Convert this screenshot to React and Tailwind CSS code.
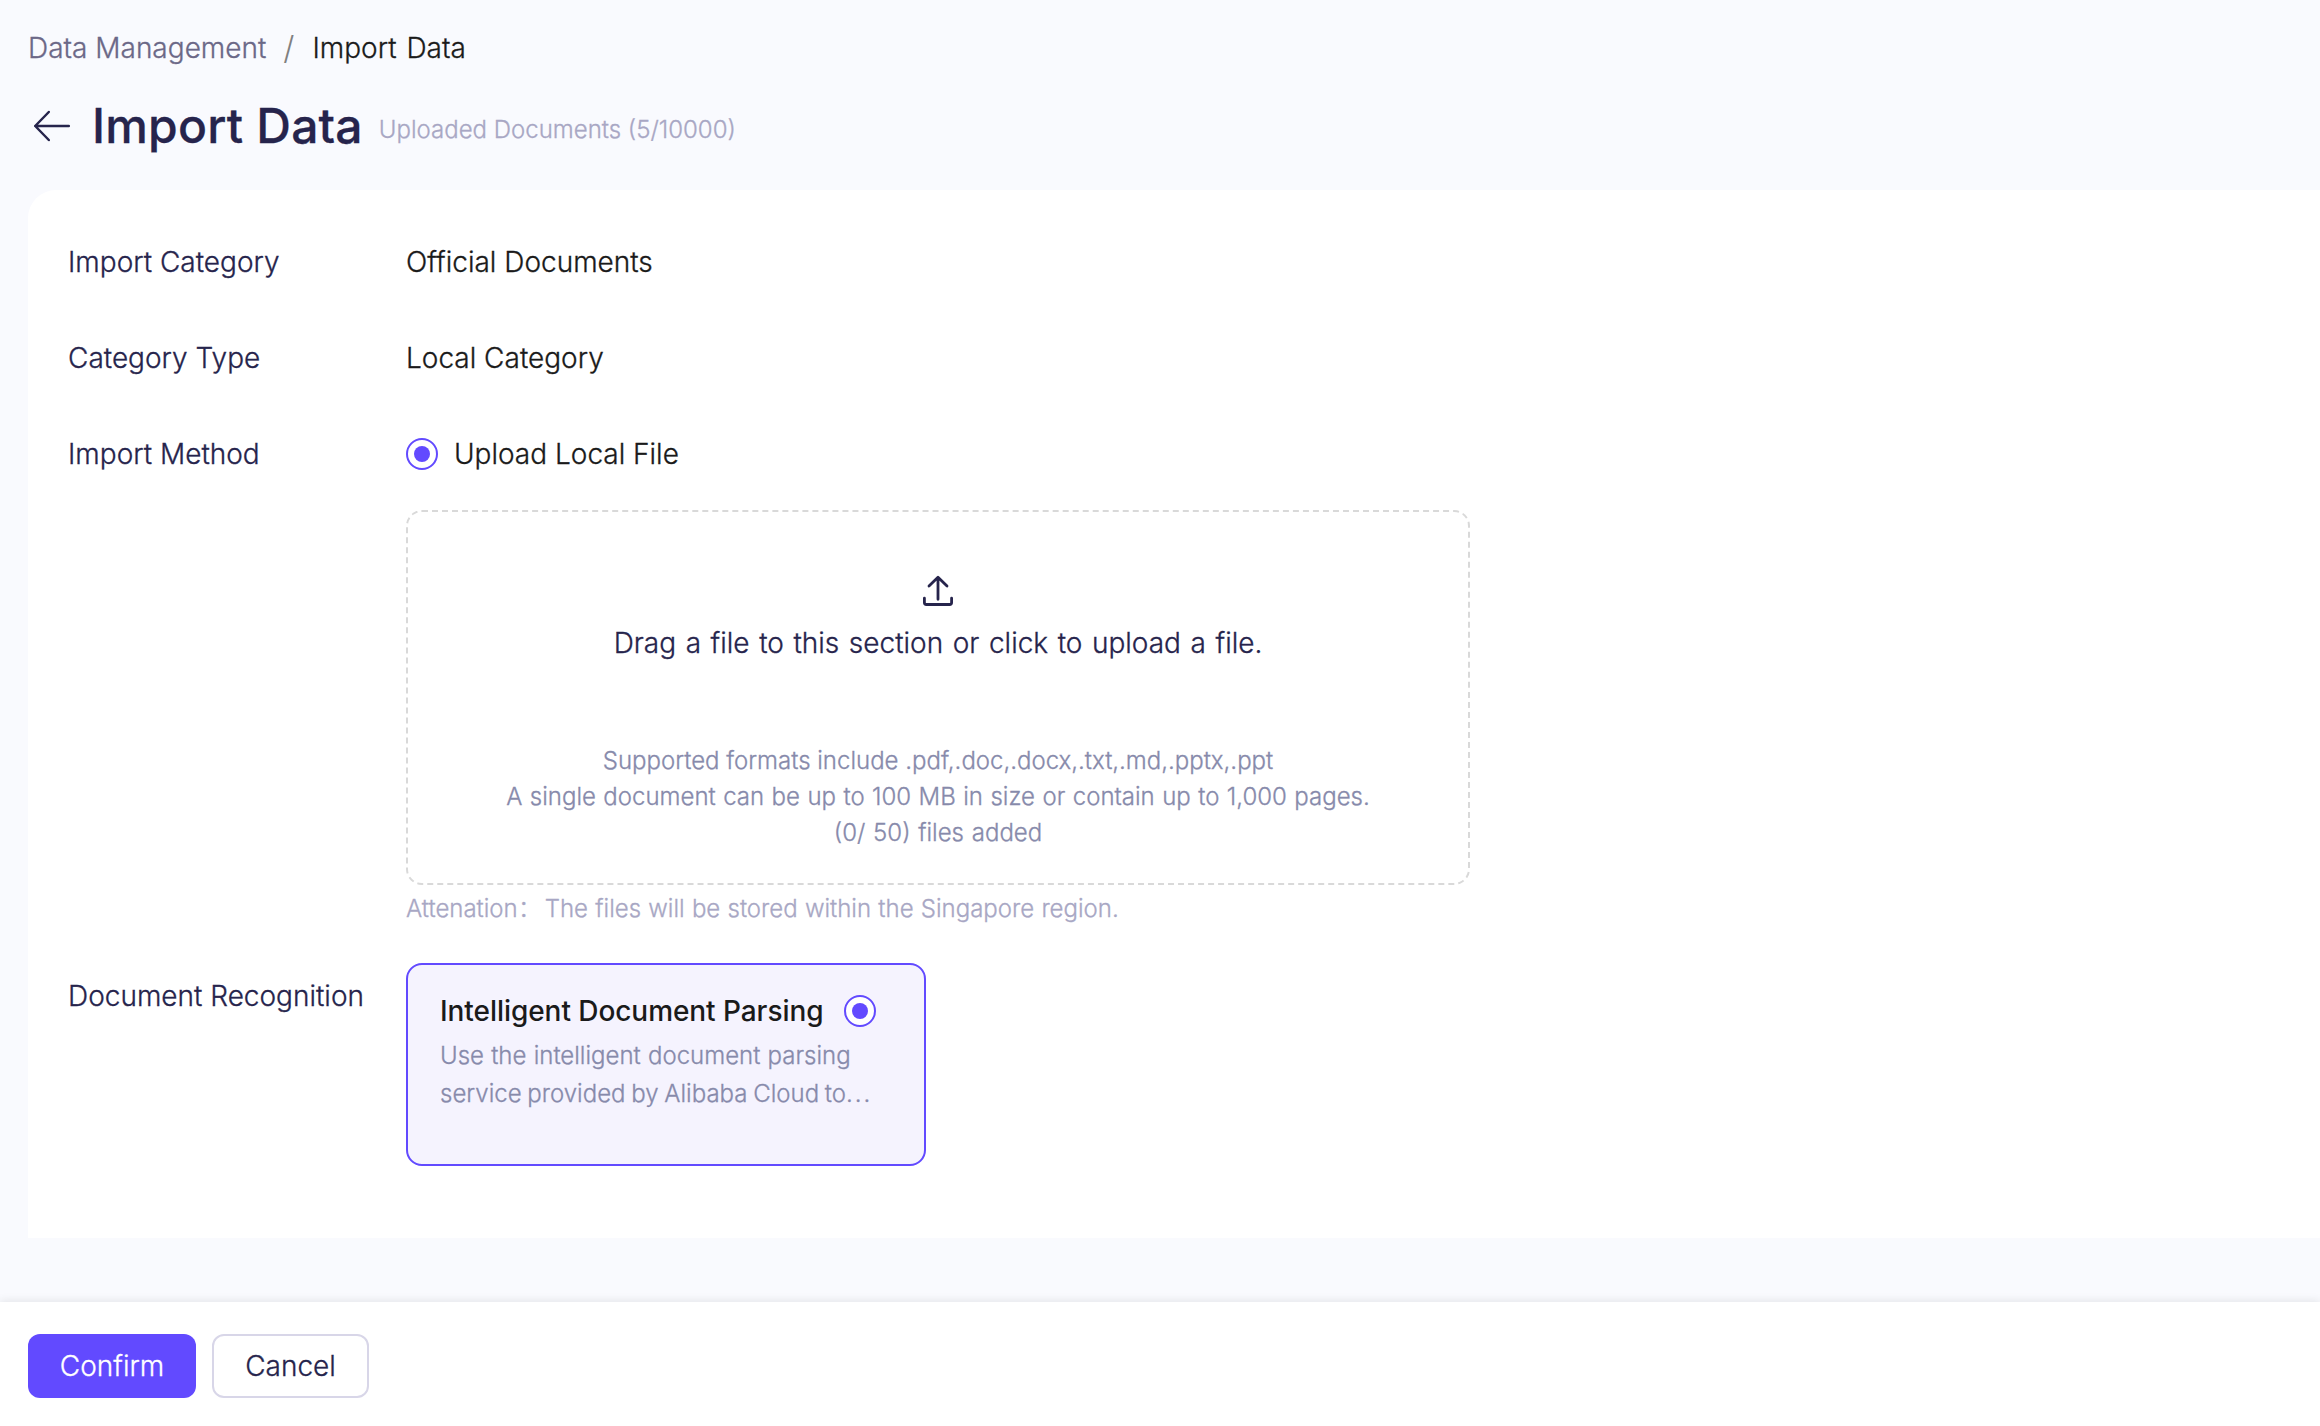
import React, { useState } from 'react';

const Radio = ({ checked }) => (
  <span className="w-8 h-8 shrink-0 rounded-full border-2 border-[#624aff] bg-white flex items-center justify-center">
    {checked && <span className="w-4 h-4 rounded-full bg-[#624aff]" />}
  </span>
);

const Row = ({ label, className, children }) => (
  <div className={`flex items-start ${className}`}>
    <div className="w-[338px] shrink-0 text-[#26244c]">{label}</div>
    <div>{children}</div>
  </div>
);

const App = () => {
  const [method, setMethod] = useState('local');
  const [parser, setParser] = useState('intelligent');

  return (
    <div className="h-screen overflow-hidden flex flex-col bg-[#f9fafe] text-[28px] leading-10 font-light [-webkit-text-stroke:0.3px] text-[#1a1a1a] whitespace-nowrap font-['Inter','Noto_Sans_CJK_SC',sans-serif]">
      <nav className="flex pl-7 pt-7">
        <span className="text-[#6b6887]">Data Management</span>
        <span className="ml-[17px] mr-[18px] text-[32px] text-[#808080] [-webkit-text-stroke:0]">/</span>
        <span className="[word-spacing:2px]">Import Data</span>
      </nav>

      <header className="flex items-center pl-8 mt-6 h-[68px]">
        <svg className="w-10 h-10" viewBox="0 0 40 40" fill="none" stroke="#26244c" strokeWidth="2.5" strokeLinecap="round" strokeLinejoin="round">
          <path d="M36.8 20H3.2M16.8 6L3.2 20l13.6 14" />
        </svg>
        <h1 className="ml-5 text-5xl font-medium tracking-[0.2px] text-[#26244c]">Import Data</h1>
        <span className="ml-4 pt-[7px] text-2xl text-[#a8a7c4]">Uploaded Documents (5/10000)</span>
      </header>

      <main className="ml-7 mt-[30px] h-[1048px] shrink-0 rounded-tl-[28px] bg-white pl-10 pt-[52px]">
        <Row label="Import Category">Official Documents</Row>
        <Row label="Category Type" className="mt-14">Local Category</Row>
        <Row label="Import Method" className="mt-14">
          <label className="flex items-center gap-4" onClick={() => setMethod('local')}>
            <Radio checked={method === 'local'} />
            Upload Local File
          </label>
          <div className="mt-9 w-[1064px] h-[375px] rounded-2xl border-2 border-dashed border-[#d9d9d9] flex flex-col items-center pt-[62px] text-[#26244c]">
            <svg className="w-8 h-8" viewBox="0 0 32 32" fill="none" stroke="currentColor" strokeWidth="2.8" strokeLinecap="round" strokeLinejoin="round">
              <path d="M16 25.3V3.4M7 12l9-8.7 9 8.7M2.4 24.2v4.3q0 2 2 2h23.2q2 0 2-2v-4.3" />
            </svg>
            <p className="mt-[17px] [word-spacing:1.7px]">Drag a file to this section or click to upload a file.</p>
            <div className="mt-20 text-2xl leading-9 text-center text-[#878aab]">
              <p>Supported formats include .pdf,.doc,.docx,.txt,.md,.pptx,.ppt</p>
              <p className="[word-spacing:0.7px]">A single document can be up to 100 MB in size or contain up to 1,000 pages.</p>
              <p className="[word-spacing:1px]">(0/ 50) files added</p>
            </div>
          </div>
          <p className="mt-1 text-2xl leading-10 text-[#a8a7c4] [word-spacing:0.5px]">
            <span className="mr-[3px]">Attenation：</span>The files will be stored within the Singapore region.
          </p>
        </Row>
        <div className="mt-[34px] flex items-start">
          <div className="w-[338px] shrink-0 pt-[13px] text-[#26244c]">Document Recognition</div>
          <div
            className="w-[520px] h-[203px] rounded-2xl border-2 border-[#624aff] bg-[#f5f3fe] pl-8 pt-[26px]"
            onClick={() => setParser('intelligent')}
          >
            <div className="flex items-center gap-[21px]">
              <span className="font-medium tracking-[-0.06px] [-webkit-text-stroke:0]">Intelligent Document Parsing</span>
              <Radio checked={parser === 'intelligent'} />
            </div>
            <p className="mt-1.5 text-2xl leading-[38px] text-[#878aab]">
              <span className="[word-spacing:0.5px]">Use the intelligent document parsing</span>
              <br />
              <span className="[word-spacing:-1px]">service provided by Alibaba Cloud to</span>
              <span className="tracking-[2px]">...</span>
            </p>
          </div>
        </div>
      </main>

      <footer className="mt-auto h-[124px] shrink-0 bg-white flex pl-7 pt-8 gap-4 shadow-[0_-2px_8px_rgba(0,0,0,0.08)]">
        <button className="w-[168px] h-16 rounded-xl bg-[#624aff] text-white">Confirm</button>
        <button className="w-[157px] h-16 rounded-xl border-2 border-[#d8d6e8] text-[#26244c]">Cancel</button>
      </footer>
    </div>
  );
};

export default App;
